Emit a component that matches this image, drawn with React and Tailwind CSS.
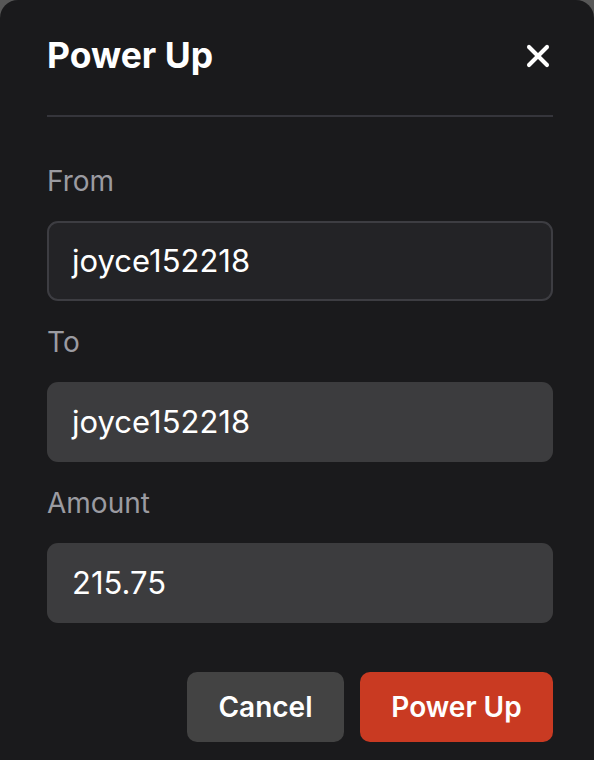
import { X } from 'lucide-react';

const font = { fontFamily: 'Inter, "Noto Sans", sans-serif' };

function Field({ label, value, active }) {
  return (
    <div className="flex flex-col">
      <label className="text-[28px] leading-[32px] text-[#9b9ba1] mb-[24px]">{label}</label>
      <div
        className={
          active
            ? 'h-[80px] rounded-[11px] border-2 border-[#3d3d42] bg-[#232326] pl-[23px] flex items-center'
            : 'h-[80px] rounded-[11px] bg-[#3c3c3e] pl-[25px] flex items-center'
        }
      >
        <span className="text-[31px] text-white">{value}</span>
      </div>
    </div>
  );
}

export default function App() {
  return (
    <div className="w-[594px] h-[760px] bg-[#575757] overflow-hidden" style={font}>
      <div className="h-full bg-[#1a1a1c] rounded-t-[18px] pl-[47px] pr-[41px] pt-[34px]">
        <div className="flex items-center justify-between h-[44px]">
          <h2 className="text-[35.5px] leading-[44px] font-bold text-white">Power Up</h2>
          <button className="text-white mr-[-3px]">
            <X size={36} strokeWidth={2.7} />
          </button>
        </div>
        <div className="mt-[37px] h-[2px] bg-[#35353b]" />

        <div className="mt-[48px] flex flex-col gap-[25px]">
          <Field label="From" value="joyce152218" active />
          <Field label="To" value="joyce152218" />
          <Field label="Amount" value="215.75" />
        </div>

        <div className="mt-[49px] flex justify-end gap-[16px]">
          <button className="h-[70px] w-[157px] rounded-[10px] bg-[#434343] text-white text-[28px] font-semibold">
            Cancel
          </button>
          <button className="h-[70px] w-[193px] rounded-[10px] bg-[#c93a22] text-white text-[28px] font-semibold">
            Power Up
          </button>
        </div>
      </div>
    </div>
  );
}
